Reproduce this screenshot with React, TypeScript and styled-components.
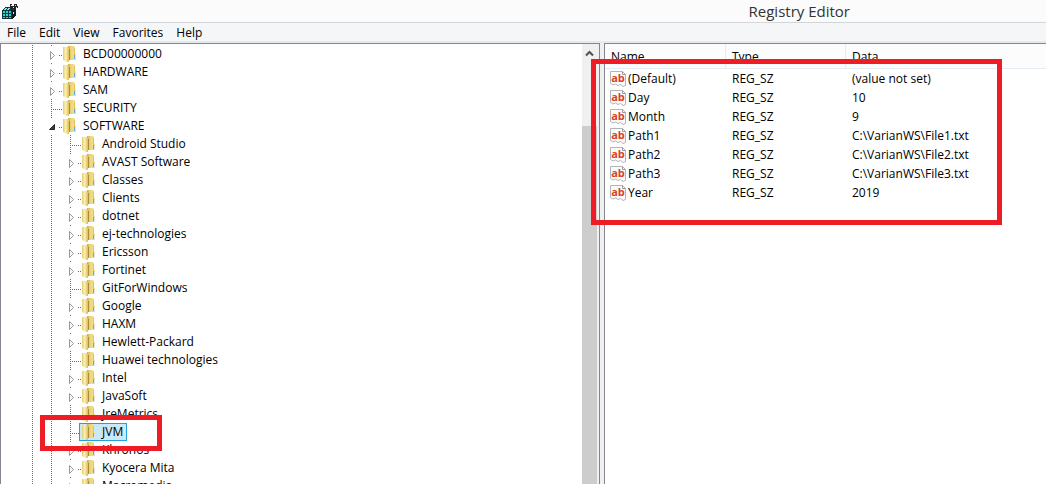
import React from 'react';
import styled, { createGlobalStyle, css } from 'styled-components';

const GlobalStyle = createGlobalStyle`
  * { box-sizing: border-box; }
  body { margin: 0; overflow: hidden; }
`;

const Window = styled.div`
  display: flex;
  flex-direction: column;
  height: 100vh;
  overflow: hidden;
  background: #f0f0f0;
  color: #000;
  font: 12px/18px 'Open Sans', 'Segoe UI', sans-serif;
`;

const TitleBar = styled.header`
  display: flex;
  align-items: center;
  justify-content: space-between;
  flex: none;
  height: 23px;
  padding: 0 196px 0 2px;
  background: #fbfbfb;
  border-bottom: 1px solid #d2d5da;
`;

const Title = styled.h1`
  margin: 0;
  font-size: 15px;
  font-weight: 400;
  line-height: 22px;
  color: #333;
`;

const MenuBar = styled.nav`
  display: flex;
  gap: 1px;
  flex: none;
  height: 20px;
  padding-left: 1px;
  background: #f5f6f7;
  border-bottom: 2px solid #e8e9ec;
`;

const MenuButton = styled.button`
  padding: 0 6px;
  border: 0;
  background: none;
  color: inherit;
  font: inherit;
  line-height: 20px;
`;

const Panes = styled.main`
  display: grid;
  grid-template-columns: minmax(0, 600fr) minmax(0, 442fr);
  column-gap: 4px;
  flex: 1;
  min-height: 0;
`;

const Pane = styled.section`
  position: relative;
  display: flex;
  min-width: 0;
  min-height: 0;
  background: #fff;
  border: solid #828790;
  border-width: 1px 0 0 1px;
`;

const TreePane = styled(Pane)`
  border-right-width: 1px;
`;

const Tree = styled.ul`
  flex: 1;
  min-width: 0;
  margin: 0;
  padding: 1px 0 0 22px;
  overflow: hidden;
  list-style: none;
`;

const TreeRow = styled.li`
  display: flex;
  height: 18px;
  white-space: nowrap;
`;

const Lines = styled.svg`
  flex: none;
  overflow: visible;
`;

const KeyLabel = styled.span<{ $selected?: boolean }>`
  display: flex;
  gap: 6px;
  margin-left: -1px;
  padding: 0 3px 0 2px;
  border: 1px solid transparent;
  line-height: 16px;
  ${({ $selected }) =>
    $selected &&
    css`
      background: #cbe8f6;
      border-color: #26a0da;
    `}
`;

const ScrollBar = styled.div`
  display: flex;
  flex-direction: column;
  flex: none;
  width: 17px;
  padding: 1px 2px 0 0;
  background: #f0f0f0;
`;

const ScrollButton = styled.button`
  display: grid;
  place-items: center;
  flex: none;
  height: 17px;
  padding: 0;
  border: 0;
  background: none;
`;

const ScrollThumb = styled.div`
  flex: 1;
  margin-top: 64px;
  background: #cdcdcd;
`;

const ValueTable = styled.table`
  align-self: flex-start;
  width: 100%;
  table-layout: fixed;
  border-collapse: separate;
  border-spacing: 0;
`;

const HeadCell = styled.th<{ $width?: number }>`
  width: ${({ $width }) => ($width ? `${$width}px` : 'auto')};
  height: 25px;
  padding: 1px 0 0 6px;
  background: #fcfcfc;
  border-bottom: 1px solid #e3ebf8;
  border-right: ${({ $width }) => ($width ? '1px solid #e3ebf8' : '0')};
  font-weight: 400;
  text-align: left;
`;

const Cell = styled.td`
  height: 19px;
  padding: 0 0 0 6px;
  line-height: 19px;
  white-space: nowrap;
`;

const ValueName = styled.span`
  display: flex;
  align-items: center;
  gap: 2px;
  margin-left: -1px;
`;

const TypeGlyph = styled.text`
  fill: #d8431f;
  font: 700 11px 'Open Sans', sans-serif;
  text-anchor: middle;
`;

const Highlight = styled.div<{ $left: number; $top: number; $width: number; $height: number }>`
  position: absolute;
  z-index: 1;
  left: ${({ $left }) => $left}px;
  top: ${({ $top }) => $top}px;
  width: ${({ $width }) => $width}px;
  height: ${({ $height }) => $height}px;
  border: 5px solid #ee1c25;
  pointer-events: none;
`;

type State = 'leaf' | 'closed' | 'open';
type Key = { name: string; depth: number; state: State; selected?: boolean };

const keys: Key[] = [
  { name: 'BCD00000000', depth: 0, state: 'closed' },
  { name: 'HARDWARE', depth: 0, state: 'closed' },
  { name: 'SAM', depth: 0, state: 'closed' },
  { name: 'SECURITY', depth: 0, state: 'leaf' },
  { name: 'SOFTWARE', depth: 0, state: 'open' },
  { name: 'Android Studio', depth: 1, state: 'leaf' },
  { name: 'AVAST Software', depth: 1, state: 'closed' },
  { name: 'Classes', depth: 1, state: 'closed' },
  { name: 'Clients', depth: 1, state: 'closed' },
  { name: 'dotnet', depth: 1, state: 'closed' },
  { name: 'ej-technologies', depth: 1, state: 'closed' },
  { name: 'Ericsson', depth: 1, state: 'closed' },
  { name: 'Fortinet', depth: 1, state: 'closed' },
  { name: 'GitForWindows', depth: 1, state: 'leaf' },
  { name: 'Google', depth: 1, state: 'closed' },
  { name: 'HAXM', depth: 1, state: 'closed' },
  { name: 'Hewlett-Packard', depth: 1, state: 'closed' },
  { name: 'Huawei technologies', depth: 1, state: 'leaf' },
  { name: 'Intel', depth: 1, state: 'closed' },
  { name: 'JavaSoft', depth: 1, state: 'closed' },
  { name: 'JreMetrics', depth: 1, state: 'leaf' },
  { name: 'JVM', depth: 1, state: 'leaf', selected: true },
  { name: 'Khronos', depth: 1, state: 'closed' },
  { name: 'Kyocera Mita', depth: 1, state: 'closed' },
  { name: 'Macromedia', depth: 1, state: 'closed' },
];

const values = [
  ['(Default)', '(value not set)'],
  ['Day', '10'],
  ['Month', '9'],
  ['Path1', 'C:\\VarianWS\\File1.txt'],
  ['Path2', 'C:\\VarianWS\\File2.txt'],
  ['Path3', 'C:\\VarianWS\\File3.txt'],
  ['Year', '2019'],
];

const dots = { stroke: '#6b6b6b', strokeDasharray: '1 1', shapeRendering: 'crispEdges' as const };

const Guide = () => (
  <Lines width="19" height="18" aria-hidden="true">
    <path d="M9.5 0V18" {...dots} />
  </Lines>
);

const Expander = ({ state }: { state: State }) => (
  <Lines width="19" height="18" aria-hidden="true">
    {state === 'leaf' ? (
      <path d="M9.5 0V18M11 10.5H20" {...dots} />
    ) : (
      <path d="M9.5 0V2M17 10.5H20" {...dots} />
    )}
    {state === 'closed' && <path d="M8.5 6.5V14.5L12.5 10.5Z" fill="#fff" stroke="#989898" />}
    {state === 'open' && <path d="M12.500 7.500V12.500H7.500Z" fill="#404040" stroke="#262626" />}
  </Lines>
);

const Folder = () => (
  <svg width="14" height="16" viewBox="0 0 14 16" aria-hidden="true">
    <defs>
      <linearGradient id="folder-front" x1="0" x2="1" y1="0" y2="0">
        <stop offset="0" stopColor="#e6cc6c" />
        <stop offset="0.45" stopColor="#fbf1b6" />
        <stop offset="1" stopColor="#dcbc58" />
      </linearGradient>
      <linearGradient id="folder-back" x1="0" x2="1" y1="0" y2="0">
        <stop offset="0" stopColor="#c9a748" />
        <stop offset="0.35" stopColor="#ecd479" />
        <stop offset="1" stopColor="#f5e492" />
      </linearGradient>
    </defs>
    <path d="M5 0H11L12 1V7L13 8V14H5Z" fill="url(#folder-back)" />
    <path d="M11 2H12V9H11Z" fill="#dfc467" />
    <path d="M0 1H5L6 2V16H4L0 14Z" fill="url(#folder-front)" />
    <path d="M6 3H7V14H6Z" fill="#a98c3c" />
    <path d="M11 9H12V13H11Z" fill="#58aede" />
    <path d="M12 9H13V13H12Z" fill="#d5e9ee" />
  </svg>
);

const StringIcon = () => (
  <svg width="16" height="16" viewBox="0 0 16 16" aria-hidden="true">
    <path
      d="M0.500 0.500H12.500L15.500 3.500V14.500L13 15.500L10.500 13.500L8 14.500L5.500 13L3 14L0.500 12.500Z"
      fill="#fbfbfb"
      stroke="#b4b4b4"
    />
    <path d="M12.500 0.500V3.500H15.500" fill="none" stroke="#999" />
    <TypeGlyph x="8" y="11">ab</TypeGlyph>
  </svg>
);

const AppIcon = () => (
  <svg width="16" height="16" viewBox="0 0 16 16" shapeRendering="crispEdges" aria-hidden="true">
    <path d="M0 7L3 4H9L14 6V12L10 16H0Z" fill="#0a3a3e" />
    <path d="M1 8H3V10H1ZM4 8H6V10H4ZM7 8H9V10H7ZM1 11H3V13H1ZM4 11H6V13H4ZM7 11H9V13H7ZM1 14H3V15H1ZM4 14H6V15H4ZM7 14H9V15H7Z" fill="#2fd0d0" />
    <path d="M3 5H5V6H3ZM6 5H8V6H6ZM2 6H4V7H2ZM5 6H7V7H5Z" fill="#8fe6e6" />
    <path d="M10 7H14V12L10 16Z" fill="#101c1e" />
    <path d="M8 1H10V3H12V1H15V3H16V5H14V7H12V6H10V8H9V4H8Z" fill="#222" />
    <path d="M9 2H10V3H9ZM13 2H14V3H13ZM11 4H12V5H11ZM14 4H15V5H14ZM11 9H12V11H11Z" fill="#b9f2f2" />
  </svg>
);

export default function App() {
  return (
    <Window>
      <GlobalStyle />
      <TitleBar>
        <AppIcon />
        <Title>Registry Editor</Title>
      </TitleBar>
      <MenuBar aria-label="Menu">
        {['File', 'Edit', 'View', 'Favorites', 'Help'].map((item) => (
          <MenuButton key={item} type="button">{item}</MenuButton>
        ))}
      </MenuBar>
      <Panes>
        <TreePane aria-label="Registry keys">
          <Tree>
            {keys.map(({ name, depth, state, selected }) => (
              <TreeRow key={name}>
                <Guide />
                {depth > 0 && <Guide />}
                <Expander state={state} />
                <KeyLabel $selected={selected}>
                  <Folder />
                  {name}
                </KeyLabel>
              </TreeRow>
            ))}
          </Tree>
          <ScrollBar>
            <ScrollButton type="button" aria-label="Scroll up">
              <svg width="9" height="7" viewBox="0 0 9 7" aria-hidden="true">
                <path d="M1 5.500L4.500 2L8 5.500" fill="none" stroke="#505050" strokeWidth="2" />
              </svg>
            </ScrollButton>
            <ScrollThumb />
          </ScrollBar>
          <Highlight $left={39} $top={371} $width={122} $height={36} />
        </TreePane>
        <Pane aria-label="Values">
          <ValueTable>
            <thead>
              <tr>
                <HeadCell $width={121}>Name</HeadCell>
                <HeadCell $width={120}>Type</HeadCell>
                <HeadCell>Data</HeadCell>
              </tr>
            </thead>
            <tbody>
              {values.map(([name, data]) => (
                <tr key={name}>
                  <Cell>
                    <ValueName>
                      <StringIcon />
                      {name}
                    </ValueName>
                  </Cell>
                  <Cell>REG_SZ</Cell>
                  <Cell>{data}</Cell>
                </tr>
              ))}
            </tbody>
          </ValueTable>
          <Highlight $left={-14} $top={15} $width={411} $height={166} />
        </Pane>
      </Panes>
    </Window>
  );
}
